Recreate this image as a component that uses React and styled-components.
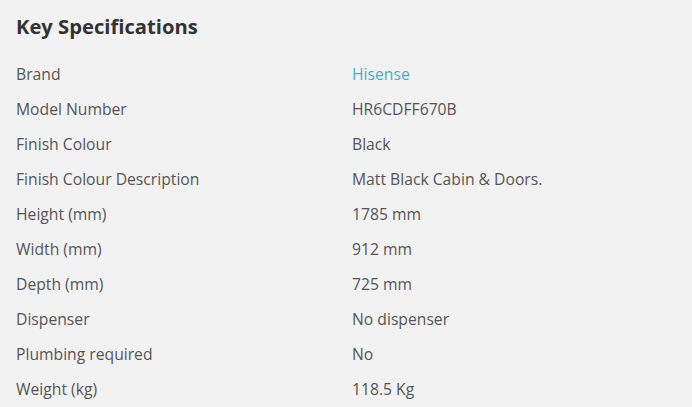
import React from 'react'
import styled, { createGlobalStyle } from 'styled-components'

const GlobalStyle = createGlobalStyle`
  html, body {
    margin: 0;
    padding: 0;
    background: #f2f2f3;
  }
  body {
    font-family: 'Open Sans', 'Liberation Sans', sans-serif;
  }
`

const SpecsPanel = styled.section`
  padding: 12px 16px 0 16px;
  background: #f2f2f3;
  min-height: 407px;
  box-sizing: border-box;
`

const Title = styled.h2`
  margin: 0 0 16px 0;
  font-size: 20.2px;
  line-height: 28px;
  font-weight: 700;
  color: #333333;
`

const SpecList = styled.dl`
  margin: 0;
  display: grid;
  grid-template-columns: 336px 1fr;
  grid-auto-rows: 35px;
  align-items: center;
`

const Label = styled.dt`
  margin: 0;
  font-size: 15.7px;
  color: #555555;
`

const Value = styled.dd`
  margin: 0;
  font-size: 15.7px;
  color: ${props => (props.$link ? '#3fb1c1' : '#555555')};
`

const specs = [
  ['Brand', 'Hisense', true],
  ['Model Number', 'HR6CDFF670B'],
  ['Finish Colour', 'Black'],
  ['Finish Colour Description', 'Matt Black Cabin & Doors.'],
  ['Height (mm)', '1785 mm'],
  ['Width (mm)', '912 mm'],
  ['Depth (mm)', '725 mm'],
  ['Dispenser', 'No dispenser'],
  ['Plumbing required', 'No'],
  ['Weight (kg)', '118.5 Kg']
]

const App = () => (
  <>
    <GlobalStyle />
    <SpecsPanel>
      <Title>Key Specifications</Title>
      <SpecList>
        {specs.map(([label, value, link]) => (
          <React.Fragment key={label}>
            <Label>{label}</Label>
            <Value $link={link}>{value}</Value>
          </React.Fragment>
        ))}
      </SpecList>
    </SpecsPanel>
  </>
)

export default App
